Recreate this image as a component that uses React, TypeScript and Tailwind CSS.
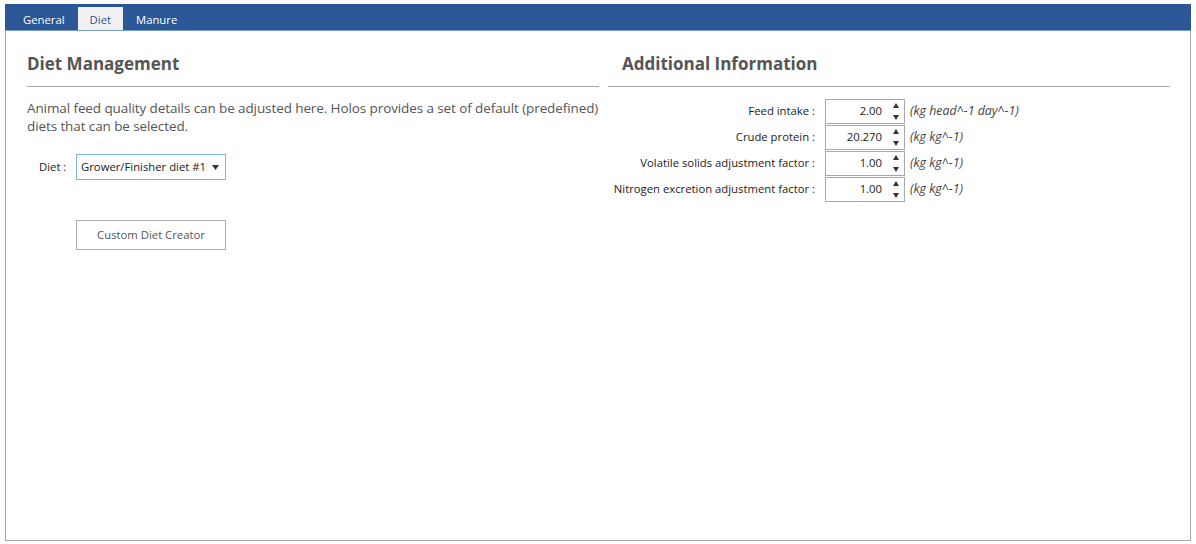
const font = "font-['Segoe_UI','Open_Sans','Noto_Sans',sans-serif]";

function Spinner() {
  return (
    <div className="flex flex-col items-center justify-center gap-[7px] w-[10px]">
      <svg width="6" height="5" viewBox="0 0 6 5">
        <path d="M3 0 L6 5 L0 5 Z" fill="#333" />
      </svg>
      <svg width="6" height="5" viewBox="0 0 6 5">
        <path d="M0 0 L6 0 L3 5 Z" fill="#333" />
      </svg>
    </div>
  );
}

const rows = [
  { label: "Feed intake :", value: "2.00", unit: "(kg head^-1 day^-1)" },
  { label: "Crude protein :", value: "20.270", unit: "(kg kg^-1)" },
  { label: "Volatile solids adjustment factor :", value: "1.00", unit: "(kg kg^-1)" },
  { label: "Nitrogen excretion adjustment factor :", value: "1.00", unit: "(kg kg^-1)" },
];

export default function App() {
  return (
    <div className={`w-[1196px] h-[544px] bg-white pt-[4px] pl-[5px] pr-[5px] ${font}`}>
      {/* tab strip */}
      <div className="h-[27px] bg-[#2b5797] flex items-end pl-[7px] border-b border-[#7a9cc9]">
        <div className="h-[23px] px-[11px] pt-[3px] flex items-center text-[11.3px] text-white">General</div>
        <div className="h-[23px] px-[12px] pt-[3px] flex items-center text-[11.3px] text-[#2b5797] bg-[#f0f0f0] ml-[2px]">Diet</div>
        <div className="h-[23px] px-[13px] pt-[3px] flex items-center text-[11.3px] text-white">Manure</div>
      </div>

      {/* content panel */}
      <div className="h-[510px] border border-t-0 border-[#a9a9a9] flex">
        {/* left column */}
        <div className="w-[593px] pl-[21px] pt-[21px]">
          <h2 className="text-[17px] font-bold text-[#555] leading-[24px] pb-[10px] border-b border-[#a9a9a9]">
            Diet Management
          </h2>
          <p className="mt-[12px] text-[13.5px] leading-[18px] text-[#555] tracking-[-0.1px] whitespace-nowrap">
            Animal feed quality details can be adjusted here. Holos provides a set of default (predefined)
            <br />
            diets that can be selected.
          </p>
          <div className="mt-[19px] flex items-center">
            <span className="w-[49px] pl-[12px] text-[11.3px] text-[#222]">Diet :</span>
            <div className="w-[150px] h-[26px] border border-[#7eb4ea] flex items-center justify-between pl-[4px] pr-[6px] text-[11.3px] text-[#222] whitespace-nowrap">
              <span>Grower/Finisher diet #1</span>
              <svg width="7" height="5" viewBox="0 0 7 5">
                <path d="M0 0 L7 0 L3.5 5 Z" fill="#333" />
              </svg>
            </div>
          </div>
          <button className="mt-[40px] ml-[49px] w-[150px] h-[30px] border border-[#adadad] text-[11.3px] text-[#555] bg-white">
            Custom Diet Creator
          </button>
        </div>

        {/* right column */}
        <div className="w-[562px] ml-[9px] pt-[21px]">
          <h2 className="text-[17px] font-bold text-[#555] leading-[24px] pb-[10px] pl-[14px] border-b border-[#a9a9a9]">
            Additional Information
          </h2>
          <div className="mt-[11px] flex flex-col">
            {rows.map((r) => (
              <div key={r.label} className="flex items-center h-[26px]">
                <span className="w-[208px] text-right text-[11.3px] text-[#222] pr-[1px] whitespace-nowrap">{r.label}</span>
                <div className="ml-[9px] w-[80px] h-[25px] border border-[#a9a9a9] flex items-center justify-end pr-[3px] text-[11.3px] text-[#222]">
                  <span className="mr-[9px]">{r.value}</span>
                  <Spinner />
                </div>
                <span className="ml-[5px] text-[12.4px] italic text-[#444] whitespace-nowrap">{r.unit}</span>
              </div>
            ))}
          </div>
        </div>
      </div>
    </div>
  );
}
